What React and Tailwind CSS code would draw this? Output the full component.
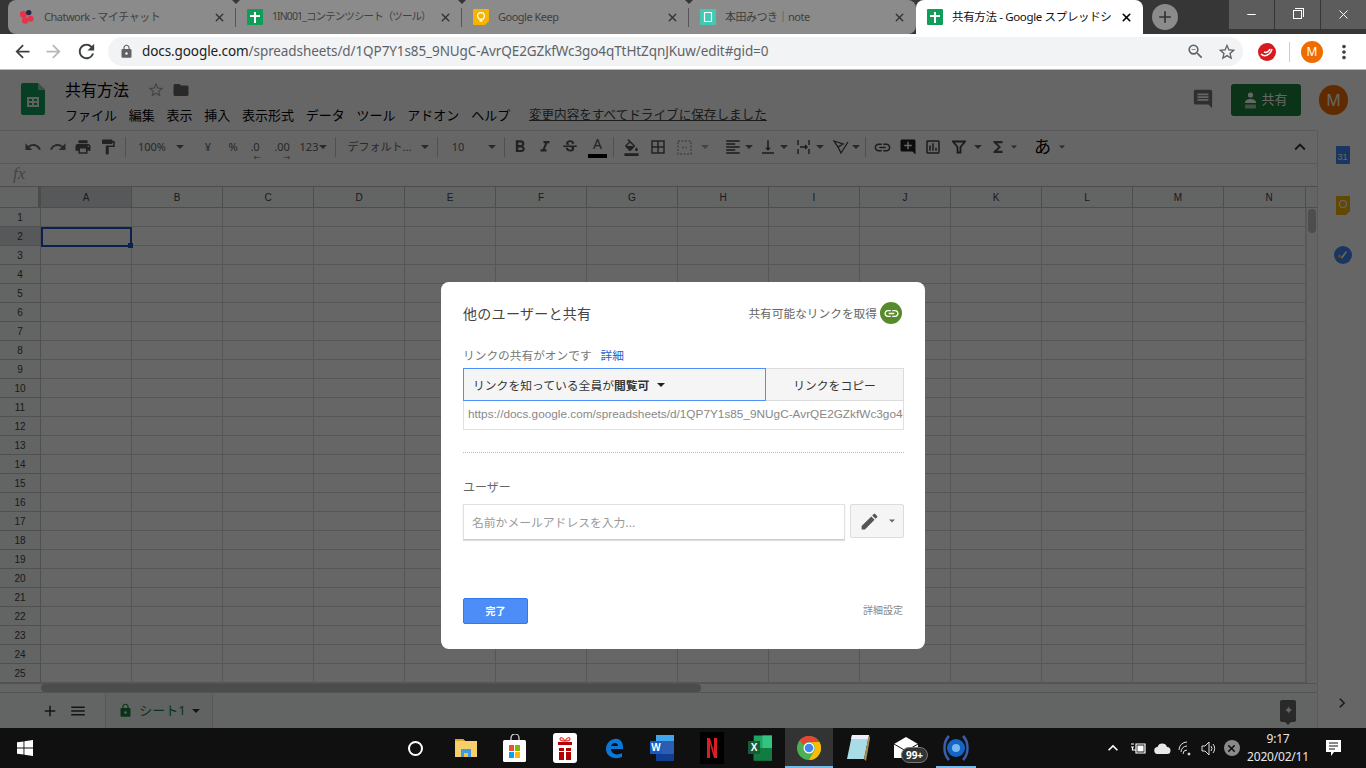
import React from "react";
import {
  MdUndo, MdRedo, MdPrint, MdFormatPaint, MdFormatBold, MdFormatItalic, MdStrikethroughS,
  MdFormatColorFill, MdBorderAll, MdFormatAlignLeft, MdVerticalAlignBottom, MdInsertLink,
  MdAddComment, MdOutlineInsertChart, MdFunctions, MdExpandLess, MdLock, MdStarBorder,
  MdFolder, MdComment, MdAdd, MdMenu, MdEdit, MdChevronRight, MdArrowBack, MdArrowForward,
  MdRefresh, MdMoreVert, MdZoomOut, MdKeyboardArrowUp,
} from "react-icons/md";
import { X, Minus } from "lucide-react";

const COLS = ["A", "B", "C", "D", "E", "F", "G", "H", "I", "J", "K", "L", "M", "N"];
const ROWS = Array.from({ length: 25 }, (_, i) => i + 1);
const MENUS = ["ファイル", "編集", "表示", "挿入", "表示形式", "データ", "ツール", "アドオン", "ヘルプ"];

const Caret = ({ className = "" }) => (
  <span className={`inline-block h-0 w-0 border-x-[4px] border-t-[4px] border-x-transparent border-t-current ${className}`} />
);

const Slot = ({ className, children }) => (
  <div className={`flex h-full shrink-0 items-center justify-center ${className}`}>{children}</div>
);

const Sep = ({ className = "" }) => <div className={`h-5 w-px shrink-0 bg-[#c8c8c8] ${className}`} />;

const SheetIcon = () => (
  <svg width="16" height="16" viewBox="0 0 16 16" className="shrink-0">
    <rect width="16" height="16" rx="1" fill="#0f9d58" />
    <path d="M7 3h2v3h4v2H9v6H7V8H3V6h4z" fill="#fff" />
  </svg>
);

const Tab = ({ icon, title, className = "w-[227px]", titleClass = "text-[11px] tracking-[-0.5px] text-[#3f3f3f]", active, divider }) => (
  <div className={`relative flex h-[34px] shrink-0 items-center pl-[11px] pr-[10px] ${className}`}>
    {icon}
    <span className={`ml-[9px] flex-1 overflow-hidden whitespace-nowrap ${titleClass}`}>
      {title}
    </span>
    <X size={13} strokeWidth={active ? 3 : 2.6} className={active ? "ml-[8px] text-black" : "ml-[4px] text-[#333]"} />
    {divider && (
      <>
        <div className="absolute right-0 top-[8px] h-[19px] w-px bg-[#555]" />
        <div className="absolute -right-[4px] top-0 h-0 w-0 border-x-[4px] border-t-[4px] border-x-transparent border-t-[#363636]" />
      </>
    )}
  </div>
);

const ChromeBar = () => (
  <div className="flex h-[34px] w-full shrink-0 bg-[#363636]">
    <div className="ml-[8px] flex w-[908px] rounded-[8px] bg-[#8b8b8b]">
      <Tab
        divider
        className="w-[228px]"
        title="Chatwork - マイチャット"
        icon={
          <svg width="16" height="20" viewBox="0 0 18 20" className="shrink-0">
            <circle cx="5" cy="7" r="4" fill="#e3344a" />
            <circle cx="11" cy="5" r="3" fill="#1d2a4a" />
            <circle cx="7" cy="14" r="3.6" fill="#e3344a" />
            <circle cx="13" cy="12" r="3.4" fill="#e3344a" />
          </svg>
        }
      />
      <Tab
        divider
        className="w-[226px]"
        titleClass="text-[10.5px] tracking-[-0.9px] text-[#3f3f3f]"
        title="1IN001_コンテンツシート（ツール）"
        icon={<SheetIcon />}
      />
      <Tab
        divider
        title="Google Keep"
        className="w-[227px]"
        icon={
          <svg width="16" height="16" viewBox="0 0 16 16" className="shrink-0">
            <path d="M1 0h14a1 1 0 0 1 1 1v11l-4 4H1a1 1 0 0 1-1-1V1a1 1 0 0 1 1-1z" fill="#f4b400" />
            <circle cx="8" cy="7" r="3.4" fill="none" stroke="#fff" strokeWidth="1.2" />
            <path d="M6.5 12h3" stroke="#fff" strokeWidth="1.4" />
          </svg>
        }
      />
      <Tab
        title="本田みつき｜note"
        className="w-[227px]"
        icon={
          <svg width="16" height="16" viewBox="0 0 16 16" className="shrink-0">
            <rect width="16" height="16" rx="1" fill="#41c9b4" />
            <path d="M4.5 3.5h7v9h-7z" fill="none" stroke="#fff" strokeWidth="1.2" />
          </svg>
        }
      />
    </div>
    <div className="w-[227px] shrink-0 rounded-t-[8px] bg-white">
      <Tab
        active
        className="w-[227px]"
        titleClass="text-[11.5px] tracking-[-0.35px] text-[#111]"
        title="共有方法 - Google スプレッドシート"
        icon={<SheetIcon />}
      />
    </div>
    <div className="ml-[9px] mt-[4px] flex h-[26px] w-[26px] items-center justify-center rounded-full bg-[#8b8b8b]">
      <MdAdd size={20} className="text-[#333]" />
    </div>
    <div className="ml-auto flex h-[29px] gap-px">
      <div className="flex w-[45px] items-center justify-center bg-[#5c5c5c] text-white"><Minus size={13} /></div>
      <div className="flex w-[45px] items-center justify-center bg-[#5c5c5c] text-white">
        <div className="relative h-[9px] w-[9px] border border-white">
          <div className="absolute -right-[3px] -top-[3px] h-[9px] w-[9px] border-r border-t border-white" />
        </div>
      </div>
      <div className="flex w-[45px] items-center justify-center bg-[#5c5c5c] text-white"><X size={15} strokeWidth={1.5} /></div>
    </div>
  </div>
);

const AddressBar = () => (
  <div className="flex h-[36px] w-full shrink-0 items-center border-b border-[#bbb] bg-white">
    <MdArrowBack size={21} className="ml-[12px] shrink-0 text-[#3c4043]" />
    <MdArrowForward size={21} className="ml-[10px] shrink-0 text-[#b5b7b9]" />
    <MdRefresh size={23} className="ml-[11px] shrink-0 text-[#3c4043]" />
    <div className="ml-[10px] flex h-[29px] w-[1135px] shrink-0 items-center rounded-full bg-[#f1f3f4] pl-[11px]">
      <MdLock size={15} className="text-[#5f6368]" />
      <span className="ml-[8px] whitespace-nowrap font-['Noto_Sans',sans-serif] text-[13.5px] tracking-[-0.09px] text-[#5f6368]">
        <span className="text-[#202124]">docs.google.com</span>/spreadsheets/d/1QP7Y1s85_9NUgC-AvrQE2GZkfWc3go4qTtHtZqnJKuw/edit#gid=0
      </span>
      <MdZoomOut size={19} className="ml-auto text-[#5f6368]" />
      <MdStarBorder size={20} className="ml-[12px] mr-[6px] text-[#5f6368]" />
    </div>
    <svg width="20" height="20" viewBox="0 0 20 20" className="ml-[14px] shrink-0">
      <circle cx="10" cy="10" r="9" fill="#d71920" />
      <path d="M4 12c3 3 9 2 11-5M7 10c2 1 5 0 6-3" fill="none" stroke="#fff" strokeWidth="1.5" />
    </svg>
    <div className="ml-[12px] h-[20px] w-px bg-[#ccc]" />
    <div className="ml-[11px] flex h-[22px] w-[22px] shrink-0 items-center justify-center rounded-full bg-[#ef6c00] text-[12px] text-white">M</div>
    <MdMoreVert size={22} className="ml-[10px] shrink-0 text-[#444]" />
  </div>
);

const DocHeader = () => (
  <div className="flex h-[60px] w-full shrink-0 bg-white">
    <svg width="24" height="32" viewBox="0 0 24 32" className="ml-[21px] mt-[13px] shrink-0">
      <path d="M2 0h15l7 7v23a2 2 0 0 1-2 2H2a2 2 0 0 1-2-2V2a2 2 0 0 1 2-2z" fill="#0f9d58" />
      <path d="M17 0l7 7h-7z" fill="#87ceac" />
      <path d="M6 14h12v10H6z M8 16v2h3v-2z M13 16v2h3v-2z M8 20v2h3v-2z M13 20v2h3v-2z" fill="#e8f5ee" fillRule="evenodd" />
    </svg>
    <div className="ml-[20px] flex flex-col">
      <div className="mt-[9px] flex h-[22px] items-center">
        <span className="text-[16px] text-black">共有方法</span>
        <MdStarBorder size={18} className="ml-[18px] text-[#aaa]" />
        <MdFolder size={18} className="ml-[7px] text-[#666]" />
      </div>
      <div className="mt-[4px] flex items-center gap-[11.75px] text-[13px] leading-[20px] text-black">
        {MENUS.map((m) => <span key={m}>{m}</span>)}
        <span className="ml-[7px] text-[12.6px] text-[#444] underline">変更内容をすべてドライブに保存しました</span>
      </div>
    </div>
    <div className="ml-auto flex items-start">
      <MdComment size={22} className="mt-[18px] text-[#777]" />
      <div className="ml-[17px] mt-[14px] flex h-[32px] w-[70px] items-center justify-center gap-[4px] rounded-[3px] bg-[#1a7f3c] text-[13px] text-white">
        <svg width="13" height="17" viewBox="0 0 13 17" fill="currentColor">
          <circle cx="6.5" cy="3" r="2.6" />
          <path d="M1 11c0-3 2.500-4 5.500-4s5.500 1 5.500 4z" />
          <rect x="1" y="12.500" width="11" height="4" rx="1" opacity="0.6" />
        </svg>
        共有
      </div>
      <div className="ml-[18px] mr-[18px] mt-[15px] flex h-[30px] w-[29px] items-center justify-center rounded-full bg-[#ef6c00] text-[16px] text-white">M</div>
    </div>
  </div>
);

const Toolbar = () => (
  <div className="flex h-[34px] w-full shrink-0 items-center border-y border-[#e0e0e0] pl-[20px] pr-[5px] text-[12px] text-[#666]">
    <Slot className="w-[25px]"><MdUndo size={18} /></Slot>
    <Slot className="w-[25px]"><MdRedo size={18} /></Slot>
    <Slot className="w-[25px] text-[#555]"><MdPrint size={18} /></Slot>
    <Slot className="w-[25px] text-[#555]"><MdFormatPaint size={18} /></Slot>
    <Sep className="mx-[5px]" />
    <Slot className="w-[42px] text-[11px]">100%</Slot>
    <Slot className="w-[14px]"><Caret /></Slot>
    <Slot className="ml-[9px] w-[24px] text-[11px]">¥</Slot>
    <Slot className="ml-[1px] w-[24px] text-[11px]">%</Slot>
    <Slot className="w-[20px] text-[11px]"><span className="relative">.0<span className="absolute -bottom-[6px] left-[3px] text-[7px] leading-[7px]">←</span></span></Slot>
    <Slot className="ml-[7px] w-[20px] text-[11px]"><span className="relative">.00<span className="absolute -bottom-[6px] left-[9px] text-[7px] leading-[7px]">→</span></span></Slot>
    <Slot className="ml-[6px] w-[22px] text-[11px]">123</Slot>
    <Slot className="w-[6px]"><Caret /></Slot>
    <Sep className="ml-[9px] mr-[5px]" />
    <Slot className="w-[77px] text-[11px]">デフォルト...</Slot>
    <Slot className="w-[14px]"><Caret /></Slot>
    <Sep className="mx-[5px]" />
    <Slot className="w-[30px] text-[11px]">10</Slot>
    <Slot className="ml-[12px] w-[14px]"><Caret /></Slot>
    <Sep className="ml-[5px]" />
    <Slot className="ml-[2px] w-[25px] text-[#555]"><MdFormatBold size={20} /></Slot>
    <Slot className="w-[25px] text-[#555]"><MdFormatItalic size={18} /></Slot>
    <Slot className="w-[25px] text-[#555]"><MdStrikethroughS size={18} /></Slot>
    <Slot className="relative ml-[3px] w-[25px] text-[#555]">
      <span className="mb-[7px] text-[14px]">A</span>
      <div className="absolute bottom-[5px] left-[3px] h-[4px] w-[19px] bg-black" />
    </Slot>
    <Sep className="ml-[3px]" />
    <Slot className="ml-[5px] w-[25px] text-[#555]"><MdFormatColorFill size={17} /></Slot>
    <Slot className="ml-[1px] w-[25px] text-[#555]"><MdBorderAll size={18} /></Slot>
    <Slot className="ml-[2px] w-[25px] text-[#aaa]">
      <svg width="15" height="15" viewBox="0 0 15 15" fill="none" stroke="currentColor" strokeWidth="1.5" strokeDasharray="2 1.5">
        <path d="M1 1h13v13H1zM5 7.500h5" />
      </svg>
    </Slot>
    <Slot className="ml-[1px] w-[14px] text-[#aaa]"><Caret /></Slot>
    <Slot className="ml-[8px] w-[25px] text-[#444]"><MdFormatAlignLeft size={18} /></Slot>
    <Slot className="w-[8px]"><Caret /></Slot>
    <Slot className="ml-[2px] w-[25px] text-[#444]"><MdVerticalAlignBottom size={18} /></Slot>
    <Slot className="w-[8px]"><Caret /></Slot>
    <Slot className="ml-[3px] w-[25px] text-[#444]">
      <svg width="16" height="16" viewBox="0 0 16 16" fill="none" stroke="currentColor" strokeWidth="1.4">
        <path d="M2 1v5M2 10v5M13 1v5M13 10v5M4 8h7M9 6l2 2-2 2" />
      </svg>
    </Slot>
    <Slot className="w-[8px]"><Caret /></Slot>
    <Slot className="ml-[6px] w-[22px] text-[#444]">
      <svg width="16" height="16" viewBox="0 0 16 16" fill="none" stroke="currentColor" strokeWidth="1.3">
        <path d="M1 2l9 3-5 3zM5 8l3 6 7-11" />
      </svg>
    </Slot>
    <Slot className="w-[8px]"><Caret /></Slot>
    <Sep className="ml-[5px]" />
    <Slot className="ml-[4px] w-[25px] text-[#444]"><MdInsertLink size={19} /></Slot>
    <Slot className="w-[25px] text-[#222]"><MdAddComment size={18} /></Slot>
    <Slot className="w-[25px] text-[#444]"><MdOutlineInsertChart size={18} /></Slot>
    <Slot className="ml-[1px] w-[25px] text-[#444]">
      <svg width="14" height="14" viewBox="0 0 14 14" fill="none" stroke="currentColor" strokeWidth="1.8">
        <path d="M1 1.500h12L8.500 7v5.500h-3V7z" />
      </svg>
    </Slot>
    <Slot className="w-[14px]"><Caret /></Slot>
    <Slot className="w-[25px] text-[#555]"><MdFunctions size={18} /></Slot>
    <Slot className="w-[8px]"><Caret className="scale-75" /></Slot>
    <Slot className="ml-[12px] w-[25px] text-[17px] text-black">あ</Slot>
    <Slot className="ml-[3px] w-[8px]"><Caret className="scale-75" /></Slot>
    <Slot className="ml-auto w-[25px] text-[#333]"><MdExpandLess size={22} /></Slot>
  </div>
);

const SheetGrid = () => (
  <div className="flex min-h-0 flex-1 flex-col bg-white">
    <div className="flex h-[22px] shrink-0 border-y border-[#c0c0c0] bg-[#f8f9fa]">
      <div className="h-full w-[41px] shrink-0 border-r-[3px] border-[#bbb]" />
      {COLS.map((c) => (
        <div
          key={c}
          className={`flex h-full items-center justify-center border-r border-[#c0c0c0] font-['Liberation_Sans',sans-serif] text-[10px] text-[#444] ${c === "N" ? "w-[82px] pl-[9px]" : "w-[91px]"} ${c === "A" ? "bg-[#dadce0]" : ""}`}
        >
          {c}
        </div>
      ))}
      <div className="flex-1" />
    </div>
    <div className="relative flex min-h-0 flex-1">
      <div className="w-[41px] shrink-0">
        {ROWS.map((r) => (
          <div
            key={r}
            className={`flex h-[19px] items-center justify-center border-b border-r border-[#c8c8c8] font-['Liberation_Sans',sans-serif] text-[10px] text-[#444] ${r === 2 ? "bg-[#dadce0]" : "bg-[#f8f9fa]"}`}
          >
            {r}
          </div>
        ))}
      </div>
      <div className="flex flex-col">
        {ROWS.map((r) => (
          <div key={r} className="flex h-[19px]">
            {COLS.map((c) => (
              <div key={c} className={`h-full border-b border-r border-[#d6d6d6] ${c === "N" ? "w-[82px]" : "w-[91px]"}`} />
            ))}
          </div>
        ))}
      </div>
      <div className="flex-1 border-l border-[#e0e0e0] bg-[#f8f9fa] px-[1px]">
        <div className="mt-[1px] h-[24px] w-full rounded-sm bg-[#c0c0c0]" />
      </div>
      {/* selected cell A2 */}
      <div className="absolute left-[41px] top-[19px] h-[20px] w-[91px] border-2 border-[#1a56c4]">
        <div className="absolute -bottom-[3px] -right-[3px] h-[5px] w-[5px] bg-[#1a56c4]" />
      </div>
    </div>
    <div className="flex h-[10px] shrink-0 border-y border-[#d0d0d0] bg-[#f8f9fa]">
      <div className="w-[41px] shrink-0" />
      <div className="w-[660px] rounded-sm bg-[#bdbdbd]" />
    </div>
    <div className="flex h-[35px] shrink-0 items-center bg-[#f8f9fa]">
      <MdAdd size={18} className="ml-[41px] text-[#333]" />
      <MdMenu size={18} className="ml-[10px] text-[#333]" />
      <div className="ml-[18px] flex h-full w-[108px] items-center justify-center gap-[6px] border-x border-[#d8d8d8] bg-[#f3f4f4] text-[13px] text-[#188038]">
        <MdLock size={15} />シート1<Caret className="text-[#333]" />
      </div>
      <div className="relative ml-auto mr-[21px] flex h-[22px] w-[16px] items-center justify-center rounded-[2px] bg-[#666] text-[11px] text-white">
        ✦
        <div className="absolute -bottom-[3px] left-[5px] h-0 w-0 border-x-[3px] border-t-[3px] border-x-transparent border-t-[#666]" />
      </div>
    </div>
  </div>
);

const SidePanel = () => (
  <div className="flex w-[49px] shrink-0 flex-col items-center border-l border-[#e0e0e0] pt-[16px]">
    <div className="ml-[1px] flex h-[18px] w-[14px] items-end justify-center rounded-[1px] bg-[#4285f4] pb-[1px] font-['Liberation_Sans',sans-serif] text-[9px] leading-[12px] text-white">31</div>
    <svg width="16" height="20" viewBox="0 0 16 20" className="ml-[1px] mt-[32px]">
      <path d="M1 0h14v15l-4 4H1z" fill="#f4b400" />
      <circle cx="8" cy="8" r="3.5" fill="none" stroke="#fff" strokeWidth="1.2" />
    </svg>
    <svg width="18" height="18" viewBox="0 0 18 18" className="ml-[1px] mt-[30px]">
      <circle cx="9" cy="9" r="9" fill="#4285f4" />
      <path d="M7 11l5-6 1 1-5 7z" fill="#fff" />
      <circle cx="5.500" cy="10" r="1.500" fill="#fbbc04" />
    </svg>
    <MdChevronRight size={20} className="mt-auto mb-[15px] text-[#555]" />
  </div>
);

const ShareDialog = () => (
  <div className="absolute left-[441px] top-[212px] flex h-[367px] w-[484px] flex-col rounded-[8px] bg-white pl-[22px] pr-[21px] font-['Noto_Sans_CJK_JP',sans-serif] text-[#555]">
    <div className="mt-[20px] flex h-[22px] items-center justify-between">
      <span className="text-[14px] tracking-[0.3px] text-[#444]">他のユーザーと共有</span>
      <div className="mr-[2px] flex items-center text-[11.7px] text-[#666]">
        共有可能なリンクを取得
        <div className="ml-[3px] flex h-[22px] w-[22px] items-center justify-center rounded-full bg-[#578a2a] text-white">
          <MdInsertLink size={17} />
        </div>
      </div>
    </div>
    <div className="mt-[22px] flex h-[18px] items-center text-[11.7px] text-[#777]">
      リンクの共有がオンです
      <span className="ml-[9px] text-[#1a66cc]">詳細</span>
    </div>
    <div className="mt-[4px] flex h-[33px]">
      <div className="flex w-[303px] items-center border border-[#4d90fe] bg-[#f5f5f5] pl-[9px] text-[11.8px] text-[#333]">
        リンクを知っている全員が<b className="font-bold">閲覧可</b>
        <Caret className="ml-[8px] text-[#222]" />
      </div>
      <div className="flex flex-1 items-center justify-center border border-l-0 border-[#dcdcdc] bg-[#f5f5f5] text-[11.8px] text-[#333]">
        リンクをコピー
      </div>
    </div>
    <div className="flex h-[29px] items-center overflow-hidden border border-t-0 border-[#e0e0e0] pl-[4px] pr-[2px]">
      <span className="whitespace-nowrap font-['Liberation_Sans',sans-serif] text-[11.8px] text-[#888]">
        https://docs.google.com/spreadsheets/d/1QP7Y1s85_9NUgC-AvrQE2GZkfWc3go4qTtHtZqnJKuw/edit?usp=sharing
      </span>
    </div>
    <div className="mt-[22px] border-t border-dotted border-[#bbb]" />
    <div className="mt-[25px] h-[18px] text-[12px] leading-[18px] text-[#666]">ユーザー</div>
    <div className="mt-[8px] flex items-start justify-between">
      <div className="flex h-[36px] w-[382px] items-center border border-[#e0e0e0] border-b-[#ccc] pl-[8px] text-[11.8px] text-[#999] shadow-[0_1px_1px_rgba(0,0,0,0.12)]">
        名前かメールアドレスを入力...
      </div>
      <div className="flex h-[34px] w-[54px] items-center justify-center gap-[8px] rounded-[2px] border border-[#dcdcdc] bg-[#f5f5f5] text-[#666]">
        <MdEdit size={21} className="text-[#555]" />
        <Caret className="scale-75" />
      </div>
    </div>
    <div className="mt-auto mb-[25px] flex items-center justify-between">
      <div className="flex h-[26px] w-[65px] items-center justify-center rounded-[2px] border border-[#3079ed] bg-[#4d8df7] pb-[2px] text-[10px] font-bold text-white">
        完了
      </div>
      <span className="mb-[3px] mr-[1px] text-[10px] text-[#888]">詳細設定</span>
    </div>
  </div>
);

const TaskIcon = ({ className, children }) => (
  <div className={`flex h-full shrink-0 items-center justify-center ${className}`}>{children}</div>
);

const Taskbar = () => (
  <div className="flex h-[40px] w-full shrink-0 items-center bg-[#101010] text-white">
    <TaskIcon className="ml-[16px] w-[18px]">
      <svg width="16" height="16" viewBox="0 0 16 16" fill="#fff">
        <path d="M0 2.300l6.500-.9v6.200H0zM7.400 1.300L16 0v7.600H7.400zM0 8.400h6.500v6.200L0 13.700zM7.400 8.400H16V16l-8.600-1.300z" />
      </svg>
    </TaskIcon>
    <TaskIcon className="ml-[371px] w-[20px]">
      <div className="h-[15px] w-[15px] rounded-full border-2 border-white" />
    </TaskIcon>
    <TaskIcon className="ml-[30px] w-[22px]">
      <svg width="22" height="20" viewBox="0 0 22 20">
        <path d="M0 1h8l2 2h12v16H0z" fill="#f5cf6b" />
        <path d="M0 1h8l2 2H0z" fill="#dfa62c" />
        <path d="M6 11h10v8h-3v-4H9v4H6z" fill="#3f9be0" />
        <path d="M9 15h4v4H9z" fill="#f5c242" />
      </svg>
    </TaskIcon>
    <TaskIcon className="ml-[26px] w-[24px]">
      <svg width="24" height="28" viewBox="0 0 24 28">
        <path d="M8 8V4a4 4 0 0 1 8 0v4" fill="none" stroke="#ddd" strokeWidth="1.200" />
        <rect y="6" width="23" height="22" rx="1.500" fill="#fff" />
        <rect x="6" y="11" width="5" height="6" fill="#f25022" />
        <rect x="12" y="11" width="5" height="6" fill="#7fba00" />
        <rect x="6" y="18" width="5" height="6" fill="#00a4ef" />
        <rect x="12" y="18" width="5" height="6" fill="#ffb900" />
      </svg>
    </TaskIcon>
    <TaskIcon className="ml-[26px] w-[24px]">
      <svg width="24" height="30" viewBox="0 0 24 30">
        <rect width="24" height="30" rx="3" fill="#fff" />
        <path d="M5 9h14v3H5zM6 15h12v3H6zM6 19h12v8H6z" fill="#b30000" />
        <path d="M11 15h2v12h-2z" fill="#fff" />
        <path d="M12 8c-2-4-5-4-5-2s3 2 5 2c2 0 5 0 5-2s-3-2-5 2z" fill="none" stroke="#e33" strokeWidth="1.200" />
      </svg>
    </TaskIcon>
    <TaskIcon className="ml-[26px] w-[22px]">
      <svg width="20" height="24" viewBox="0 0 20 24">
        <path d="M19 13H7c0 5 6 7 11 4v4c-7 3-16 0-16-8C2 4 13 0 17 5c2 2 2 5 2 8zM7 10h7c0-4-6-4-7 0z" fill="#0a78d7" />
      </svg>
    </TaskIcon>
    <TaskIcon className="relative ml-[25px] w-[24px]">
      <svg width="24" height="28" viewBox="0 0 24 28">
        <path d="M6 1h18v26H6z" fill="#2b5db3" />
        <path d="M6 1h18v6H6z" fill="#41a5ee" />
        <path d="M6 20h18v7H6z" fill="#103f91" />
      </svg>
      <div className="absolute left-0 top-[13px] flex h-[13px] w-[12px] items-center justify-center bg-[#185abd] font-['Liberation_Sans',sans-serif] text-[10px] font-bold">W</div>
    </TaskIcon>
    <TaskIcon className="ml-[26px] w-[24px]">
      <svg width="24" height="32" viewBox="0 0 24 32">
        <rect width="24" height="32" fill="#000" />
        <path d="M7 6h3l4 14V6h3v20h-3L10 12v14H7z" fill="#d81f26" />
      </svg>
    </TaskIcon>
    <TaskIcon className="relative ml-[24px] w-[24px]">
      <svg width="25" height="28" viewBox="0 0 25 28">
        <path d="M6 1h19v26H6z" fill="#21a366" />
        <path d="M15 1h10v13H15z" fill="#33c481" />
        <path d="M6 14h19v13H6z" fill="#107c41" />
      </svg>
      <div className="absolute left-0 top-[13px] flex h-[13px] w-[12px] items-center justify-center bg-[#185c37] font-['Liberation_Sans',sans-serif] text-[10px] font-bold">X</div>
    </TaskIcon>
    <div className="relative ml-[13px] flex h-full w-[48px] shrink-0 items-center justify-center bg-[#333]">
      <svg width="24" height="24" viewBox="0 0 24 24">
        <circle cx="12" cy="12" r="12" fill="#4caf50" />
        <path d="M12 0a12 12 0 0 1 10.400 6H12a6 6 0 0 0-5.200 3L2.600 4.500A12 12 0 0 1 12 0z" fill="#ea4335" />
        <path d="M22.400 6A12 12 0 0 1 12 24l5.200-9A6 6 0 0 0 12 6z" fill="#fbbc04" />
        <circle cx="12" cy="12" r="5.500" fill="#fff" />
        <circle cx="12" cy="12" r="4.300" fill="#4285f4" />
      </svg>
      <div className="absolute bottom-0 left-0 h-[2px] w-full bg-[#76b9ed]" />
    </div>
    <TaskIcon className="ml-[13px] w-[24px]">
      <svg width="24" height="28" viewBox="0 0 24 28">
        <path d="M6 1h17l-5 24H1z" fill="#a8dde8" />
        <path d="M6 1h17l-1 4H5z" fill="#eef" />
        <path d="M18 25l5-24 1 3-4 23z" fill="#b08a50" />
      </svg>
    </TaskIcon>
    <div className="relative ml-[24px] flex h-full w-[24px] shrink-0 items-center justify-center">
      <svg width="24" height="24" viewBox="0 0 24 24">
        <path d="M0 8l12-7 12 7v14H0z" fill="#fff" />
        <path d="M0 8l12 7 12-7" fill="none" stroke="#111" strokeWidth="1" />
      </svg>
      <div className="absolute left-[7px] top-[19px] flex h-[16px] w-[27px] items-center justify-center rounded-full border border-[#777] bg-[#333] text-[10px] font-bold">99+</div>
    </div>
    <div className="relative ml-[18px] flex h-full w-[40px] shrink-0 items-center justify-center">
      <svg width="26" height="30" viewBox="0 0 26 30">
        <circle cx="13" cy="15" r="9" fill="#1565c8" />
        <circle cx="13" cy="15" r="4" fill="#7db7f0" />
        <path d="M6 3C0 9 0 21 6 27M20 3c6 6 6 18 0 24" fill="none" stroke="#3a5fa8" strokeWidth="2.500" />
      </svg>
      <div className="absolute bottom-0 left-0 h-[2px] w-full bg-[#76b9ed]" />
    </div>
    <div className="ml-[127px] flex h-full w-[137px] shrink-0 items-center justify-between">
      <MdKeyboardArrowUp size={20} />
      <svg width="16" height="14" viewBox="0 0 16 14" fill="none" stroke="#fff" strokeWidth="1.200">
        <path d="M1 3h3M1 6h3M2.500 6v3h3M6 3h9v9H6z" /><path d="M8 5h5v5H8z" fill="#fff" />
      </svg>
      <svg width="17" height="11" viewBox="0 0 17 11" fill="#e8e8e8">
        <path d="M4 11a3.500 3.500 0 0 1-.5-7A5 5 0 0 1 13 4a3.500 3.500 0 0 1 0 7z" />
      </svg>
      <svg width="15" height="15" viewBox="0 0 15 15" fill="none" stroke="#ddd" strokeWidth="1">
        <path d="M1 9a8 8 0 0 1 8-8M3 11a6 6 0 0 1 6-6M5 13a4 4 0 0 1 4-4" />
        <circle cx="11" cy="13" r="1" fill="#fff" />
      </svg>
      <svg width="16" height="15" viewBox="0 0 16 15" fill="none" stroke="#ddd" strokeWidth="1">
        <path d="M1 5h3l4-4v13l-4-4H1zM10 5a4 4 0 0 1 0 5M12 3a7 7 0 0 1 0 9" />
      </svg>
      <div className="flex h-[16px] w-[16px] items-center justify-center rounded-full bg-[#8a8a8a] text-[#111]"><X size={11} strokeWidth={3.5} /></div>
    </div>
    <div className="ml-[8px] flex w-[60px] shrink-0 flex-col items-center text-[12px] leading-[18px] tracking-[-0.2px] text-[#e8e8e8]">
      <span>9:17</span>
      <span className="whitespace-nowrap">2020/02/11</span>
    </div>
    <TaskIcon className="ml-[17px] w-[18px]">
      <svg width="18" height="18" viewBox="0 0 18 18">
        <path d="M1 1h15v12H9l-3 4v-4H1z" fill="#fff" />
        <path d="M4 4h9M4 7h9M4 10h6" stroke="#111" strokeWidth="1" />
      </svg>
    </TaskIcon>
  </div>
);

export default function App() {
  return (
    <div className="flex h-[768px] w-[1366px] flex-col overflow-hidden font-['Noto_Sans','Noto_Sans_CJK_JP',sans-serif]">
      <ChromeBar />
      <AddressBar />
      <div className="relative flex min-h-0 flex-1 flex-col bg-white">
        <DocHeader />
        <div className="flex min-h-0 flex-1">
          <div className="flex min-w-0 flex-1 flex-col">
            <Toolbar />
            <div className="flex h-[22px] shrink-0 items-center pb-[2px] pl-[13px] font-['Liberation_Serif',serif] text-[17px] italic text-[#aaa]">fx</div>
            <SheetGrid />
          </div>
          <SidePanel />
        </div>
        {/* dimmed backdrop and dialog */}
        <div className="absolute inset-0 bg-black/60" />
        <ShareDialog />
      </div>
      <Taskbar />
    </div>
  );
}
